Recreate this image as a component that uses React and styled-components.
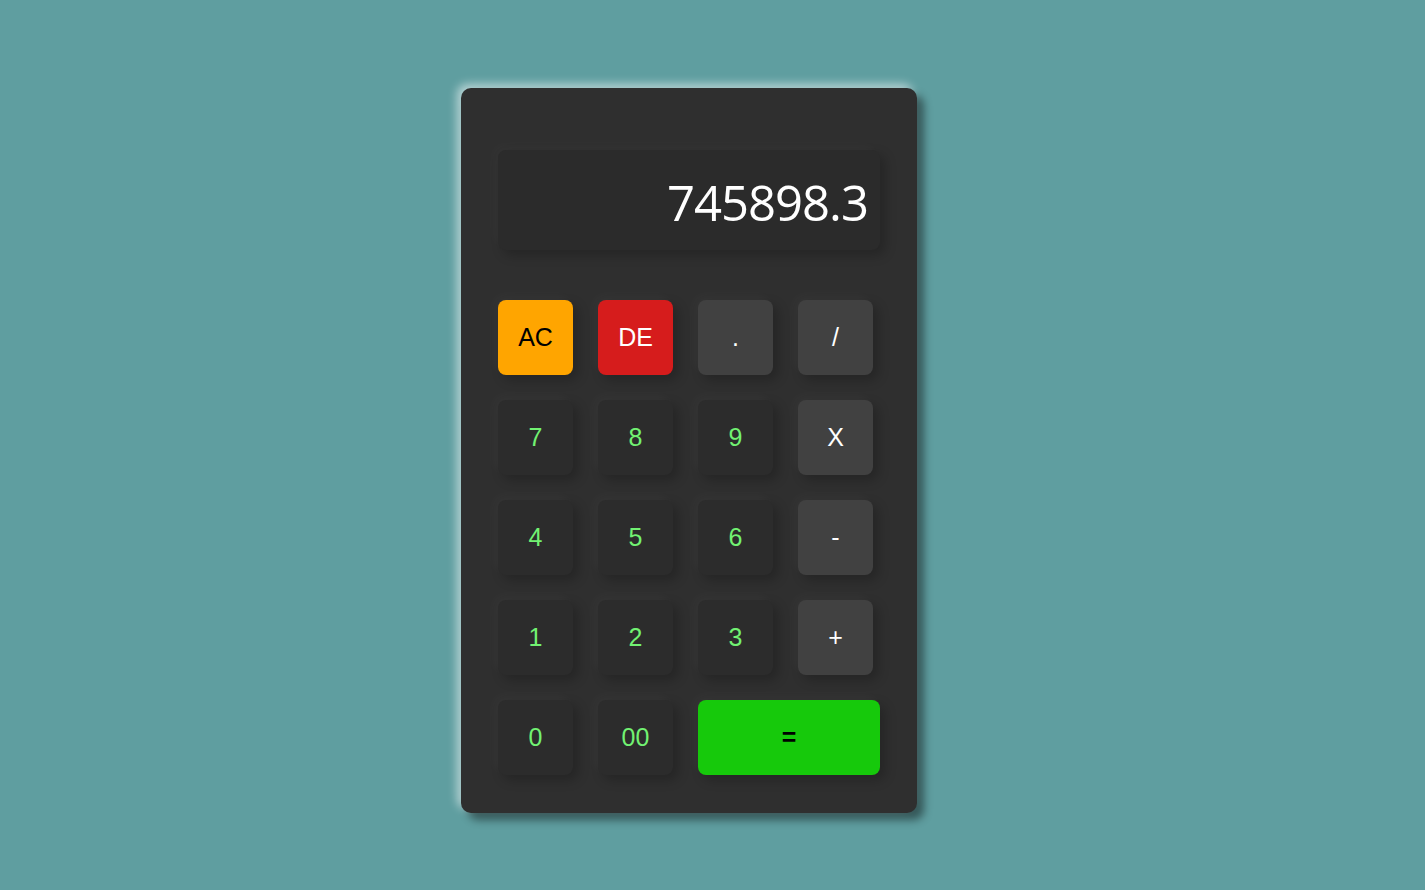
import React from "react";
import styled, { createGlobalStyle } from "styled-components";

const GlobalStyle = createGlobalStyle`
  html, body {
    margin: 0;
    padding: 0;
    background-color: #5f9ea0;
    font-family: "Liberation Sans", Arial, sans-serif;
  }
`;

const Page = styled.div`
  min-height: 890px;
  display: flex;
  align-items: flex-start;
  padding: 88px 0 0 461px;
  box-sizing: border-box;
`;

const Body = styled.div`
  width: 456px;
  height: 725px;
  box-sizing: border-box;
  padding: 62px 37px 38px 37px;
  background-color: #2f2f2f;
  border-radius: 10px;
  box-shadow: 7px 7px 8px rgba(0, 0, 0, 0.45),
    -4px -4px 10px rgba(255, 255, 255, 0.55);
  display: flex;
  flex-direction: column;
  gap: 50px;
`;

const Display = styled.div`
  height: 100px;
  border-radius: 8px;
  background-color: #2b2b2b;
  box-shadow: 5px 5px 12px rgba(0, 0, 0, 0.22),
    -5px -5px 12px rgba(255, 255, 255, 0.025);
  display: flex;
  align-items: center;
  justify-content: flex-end;
  padding: 4px 12px 0 0;
  font-family: "Open Sans", "Noto Sans", sans-serif;
  font-size: 49px;
  letter-spacing: -1px;
  color: #ffffff;
`;

const Keys = styled.div`
  display: grid;
  grid-template-columns: repeat(4, 75px);
  grid-auto-rows: 75px;
  gap: 25px;
`;

const tones = {
  num: { bg: "#2c2c2c", fg: "#72f272" },
  op: { bg: "#414141", fg: "#ffffff" },
  clear: { bg: "#ffa500", fg: "#000000" },
  del: { bg: "#d61c1c", fg: "#ffffff" },
  equal: { bg: "#16c90b", fg: "#000000" },
};

const Key = styled.button`
  width: ${(p) => (p.$wide ? "182px" : "75px")};
  grid-column: ${(p) => (p.$wide ? "span 2" : "auto")};
  height: 75px;
  border: none;
  border-radius: 8px;
  background-color: ${(p) => tones[p.$tone].bg};
  color: ${(p) => tones[p.$tone].fg};
  font-family: "Liberation Sans", Arial, sans-serif;
  font-size: 25px;
  font-weight: ${(p) => (p.$tone === "equal" ? 700 : 400)};
  box-shadow: 5px 5px 12px rgba(0, 0, 0, 0.22),
    -4px -4px 12px rgba(255, 255, 255, 0.03);
  padding: 0;
  cursor: pointer;
`;

const keys = [
  ["AC", "clear"],
  ["DE", "del"],
  [".", "op"],
  ["/", "op"],
  ["7", "num"],
  ["8", "num"],
  ["9", "num"],
  ["X", "op"],
  ["4", "num"],
  ["5", "num"],
  ["6", "num"],
  ["-", "op"],
  ["1", "num"],
  ["2", "num"],
  ["3", "num"],
  ["+", "op"],
  ["0", "num"],
  ["00", "num"],
  ["=", "equal"],
];

export default function App() {
  return (
    <>
      <GlobalStyle />
      <Page>
        <Body>
          <Display>745898.3</Display>
          <Keys>
            {keys.map(([label, tone]) => (
              <Key key={label} $tone={tone} $wide={tone === "equal"}>
                {label}
              </Key>
            ))}
          </Keys>
        </Body>
      </Page>
    </>
  );
}
